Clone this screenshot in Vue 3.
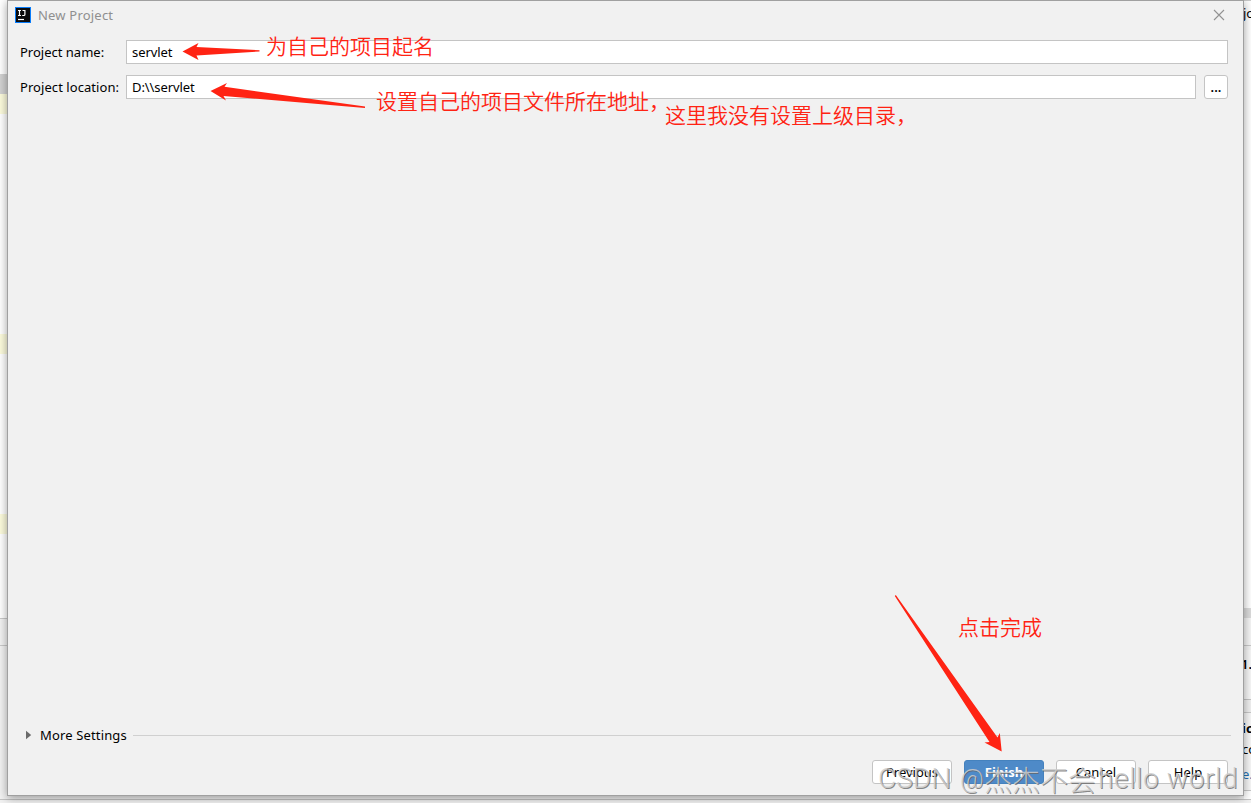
<script setup>
import { ref } from "vue";

const projectName = ref("servlet");
const projectLocation = ref("D:\\\\servlet");

const actions = [
  { label: "Previous" },
  { label: "Finish", primary: true },
  { label: "Cancel" },
  { label: "Help" },
];

// red remarks drawn over the dialog
const notes = [
  { text: "为自己的项目起名", x: 266, y: 30 },
  { text: "设置自己的项目文件所在地址，", x: 376, y: 85 },
  { text: "这里我没有设置上级目录，", x: 665, y: 99 },
  { text: "点击完成", x: 958, y: 611 },
];
</script>

<template>
  <div class="desktop">
    <div class="backdrop">
      <div class="strip left">
        <i class="gap-top"></i>
        <i class="selected"></i>
        <i class="yellow"></i>
        <i class="gap-a"></i>
        <i class="yellow"></i>
        <i class="gap-b"></i>
        <i class="yellow"></i>
        <i class="gap-c"></i>
        <i class="bar"></i>
        <i class="panel"></i>
      </div>
      <div class="strip right">
        <div class="peek peek-top">jo</div>
        <i class="divider"></i>
        <i class="bar"></i>
        <div class="peek peek-version">1.</div>
        <i class="spacer"></i>
        <div class="peek-card">
          <b>ic</b>
          <span>co</span>
          <a>e.</a>
        </div>
      </div>
    </div>

    <main class="dialog">
      <header class="titlebar">
        <svg class="logo" viewBox="0 0 16 16" aria-hidden="true">
          <rect width="16" height="16" fill="#087cfa" />
          <rect x="1" y="1" width="14" height="14" fill="#0b0b0d" />
          <path d="M3 3.5h3M4.5 3.5v5M3 8.5h3M7.5 3.5h3M9.9 3.5v4q0 1-1 1H7.2" fill="none" stroke="#fff" stroke-width="1.2" />
          <path d="M3 12.5h6" stroke="#fff" stroke-width="1.2" />
        </svg>
        <h1 class="title">New Project</h1>
        <svg class="close" viewBox="0 0 12 12" aria-hidden="true">
          <path d="M1 1l10 10M11 1L1 11" stroke="#929292" stroke-width="1.1" />
        </svg>
      </header>

      <form class="form" @submit.prevent>
        <label class="label" for="name">Project name:</label>
        <input id="name" v-model="projectName" class="field wide" />
        <label class="label location" for="location">Project location:</label>
        <input id="location" v-model="projectLocation" class="field" />
        <button class="browse" type="button">...</button>
      </form>

      <section class="more">
        <svg class="caret" viewBox="0 0 6 10" aria-hidden="true">
          <path d="M0 .8L5.2 5L0 9.2z" fill="#6b6b6b" />
        </svg>
        <span class="more-label">More Settings</span>
        <span class="rule"></span>
      </section>

      <footer class="actions">
        <button
          v-for="action in actions"
          :key="action.label"
          class="btn"
          :class="{ primary: action.primary }"
          type="button"
        >
          {{ action.label }}
        </button>
      </footer>
    </main>

    <svg class="arrows" viewBox="0 0 1251 803" aria-hidden="true">
      <g fill="#ff2313">
        <path d="M182.5 51.5L198.5 43L196.5 47L259.5 50.2V51.4L196.5 55.5L198.5 60z" />
        <path d="M210.5 91L227 83L224.5 86.8L365 106.6V108L223.5 96L226 100.5z" />
        <path d="M895.8 595L997.5 737.5L999.8 733L1001.7 751.5L984.5 742.5L989.5 742L894.8 596z" />
      </g>
    </svg>

    <p
      v-for="note in notes"
      :key="note.text"
      class="note"
      :style="{ left: note.x + 'px', top: note.y + 'px' }"
    >
      {{ note.text }}
    </p>

    <p class="watermark">
      <span class="wm-site">CSDN</span>
      <span class="wm-at">@</span>
      <span class="wm-name">杰杰不会</span>
      <span class="wm-hello">hello world</span>
    </p>
  </div>
</template>

<style>
body {
  margin: 0;
  overflow: hidden;
}
</style>

<style scoped>
.desktop {
  position: relative;
  width: 1251px;
  height: 803px;
  overflow: hidden;
  display: flex;
  background: #f2f2f2;
  font-family: "Noto Sans", "Noto Sans CJK SC", sans-serif;
  font-size: 13px;
  color: #000;
}

.desktop * {
  box-sizing: border-box;
}

.backdrop {
  position: absolute;
  inset: 0;
  display: flex;
  justify-content: space-between;
  height: 800px;
  border-bottom: 1px solid #c4c4c4;
}

.strip {
  display: flex;
  flex-direction: column;
  width: 7px;
  background: #fff;
}

.strip i {
  flex: none;
}

.gap-top {
  height: 74px;
}

.selected {
  height: 20px;
  background: #d2d2d2;
}

.yellow {
  height: 20px;
  background: #fcfbdc;
}

.gap-a {
  height: 220px;
}

.gap-b {
  height: 160px;
}

.gap-c {
  height: 84px;
}

.left .bar {
  height: 28px;
  background: #f2f2f2;
  border-top: 1px solid #c9c9c9;
  border-bottom: 1px solid #c9c9c9;
}

.left .panel {
  flex: 1;
  background: #f2f2f2;
}

.peek {
  overflow: hidden;
  white-space: nowrap;
  text-indent: -1px;
}

.peek-top {
  height: 608px;
  padding-top: 3px;
  border-top: 1px solid #c9c9c9;
}

.divider {
  height: 10px;
  background: #dcdcdc;
}

.right .bar {
  height: 28px;
  background: #f5f5f5;
  border-bottom: 1px solid #c9c9c9;
}

.peek-version {
  height: 54px;
  padding-top: 5px;
  background: #f7f7f7;
  border-top: 4px solid #f2f2f2;
  border-bottom: 1px solid #c4c4c4;
  font-weight: 600;
  text-indent: -3px;
}

.spacer {
  height: 12px;
  background: #f0f0f0;
}

.peek-card {
  display: flex;
  flex-direction: column;
  height: 79px;
  padding-top: 5px;
  overflow: hidden;
  border-top: 1px solid #c9c9c9;
  border-bottom: 1px solid #c9c9c9;
  background: #f7f7f7;
  text-indent: -2px;
}

.peek-card b,
.peek-card span,
.peek-card a {
  height: 21px;
  line-height: 20px;
}

.peek-card a {
  height: 25px;
  padding-top: 4px;
  color: #2470b3;
}

.dialog {
  position: relative;
  display: flex;
  flex-direction: column;
  width: 1237px;
  height: 796px;
  margin-left: 7px;
  border: 1px solid #a0a0a0;
  background: #f1f1f1;
  box-shadow: 0 2px 9px rgba(0, 0, 0, 0.38);
}

.titlebar {
  display: flex;
  align-items: center;
  height: 28px;
  padding: 0 18px 0 7px;
}

.logo {
  width: 16px;
  height: 16px;
}

.title {
  flex: 1;
  margin: 0 0 0 7px;
  font-size: 13px;
  font-weight: 400;
  line-height: 18px;
  letter-spacing: 0.2px;
  color: #8f8f8f;
}

.close {
  width: 12px;
  height: 12px;
}

.form {
  display: grid;
  grid-template-columns: 106px 1070px 32px;
  grid-template-rows: 24px 24px;
  row-gap: 11px;
  align-items: center;
  justify-content: start;
  margin: 11px 0 0 12px;
}

.label {
  line-height: 24px;
  white-space: nowrap;
}

.location {
  letter-spacing: 0.06px;
}

.field {
  height: 24px;
  padding: 0 5px;
  border: 1px solid #c4c4c4;
  border-radius: 0;
  outline: none;
  background: #fff;
  font: inherit;
  letter-spacing: -0.08px;
  color: inherit;
}

.wide {
  grid-column: 2 / 4;
}

.browse {
  width: 24px;
  height: 24px;
  margin-left: 8px;
  padding: 0;
  border: 1px solid #c4c4c4;
  border-radius: 3px;
  background: #fff;
  font: 600 13px/20px "Noto Sans", sans-serif;
  color: #000;
}

.more {
  display: flex;
  align-items: center;
  height: 20px;
  margin: auto 12px 0 18px;
}

.caret {
  width: 6px;
  height: 10px;
  margin-right: 8px;
}

.more-label {
  letter-spacing: 0.15px;
}

.rule {
  flex: 1;
  height: 1px;
  margin-left: 6px;
  background: #d0d0d0;
}

.actions {
  display: flex;
  justify-content: flex-end;
  gap: 12px;
  margin: 15px 15px 11px 0;
}

.btn {
  width: 80px;
  height: 24px;
  padding: 0;
  border: 1px solid #c4c4c4;
  border-radius: 3px;
  background: #fff;
  font: 400 13px/22px "Noto Sans", sans-serif;
  color: #000;
}

.btn.primary {
  border-color: #4582be;
  background: #4e8ac8;
  font-weight: 700;
  color: #fff;
}

.arrows {
  position: absolute;
  left: 0;
  top: 0;
  width: 1251px;
  height: 803px;
  pointer-events: none;
}

.note {
  position: absolute;
  margin: 0;
  font: 350 21px/30px "Noto Sans CJK SC", sans-serif;
  white-space: nowrap;
  color: #ff2313;
}

.watermark {
  position: absolute;
  left: 878px;
  top: 761px;
  display: flex;
  margin: 0;
  font: 300 28px/36px Roboto, "Noto Sans CJK SC", sans-serif;
  white-space: nowrap;
  color: rgba(205, 205, 205, 0.85);
  text-shadow: 1px 1px 0 rgba(100, 100, 100, 0.75);
  pointer-events: none;
}

.wm-site {
  width: 82px;
}

.wm-at {
  width: 24px;
  font-size: 26px;
}

.wm-name {
  width: 114px;
  font-family: "Noto Sans CJK SC", sans-serif;
}

.wm-hello {
  letter-spacing: 0.65px;
}
</style>
